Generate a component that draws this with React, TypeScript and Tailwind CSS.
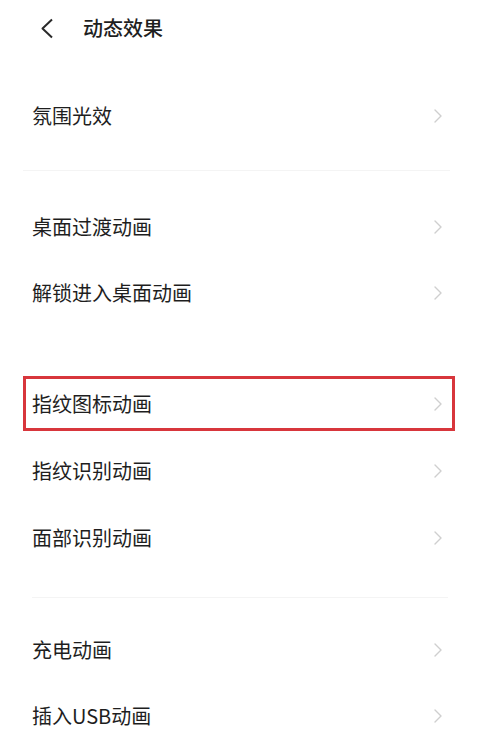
import React from "react";

const font = { fontFamily: '"Noto Sans CJK SC", "Noto Sans", sans-serif' };

function Chevron() {
  return (
    <svg width="8" height="14" viewBox="0 0 8 14" fill="none">
      <path d="M1 1l6 6-6 6" stroke="#cfcfcf" strokeWidth="1.4" strokeLinecap="round" strokeLinejoin="round" />
    </svg>
  );
}

type RowProps = { label: string; h: string; highlight?: boolean };

function Row({ label, h, highlight }: RowProps) {
  return (
    <div className={`${h} flex items-center px-[23px]`}>
      {highlight ? (
        <div className="flex h-[55px] w-full items-center justify-between border-[3px] border-[#d8363c] pl-[6px] pr-[10px]">
          <span className="text-[20px] leading-none text-[#1e1e1e]">{label}</span>
          <Chevron />
        </div>
      ) : (
        <div className="flex w-full items-center justify-between pl-[9px] pr-[13px]">
          <span className="text-[20px] leading-none text-[#1e1e1e]">{label}</span>
          <Chevron />
        </div>
      )}
    </div>
  );
}

function Divider({ top, bottom, inset }: { top: string; bottom: string; inset: string }) {
  return (
    <div className={`${top} ${bottom}`}>
      <div className={`${inset} h-px bg-[#f4f4f4]`} />
    </div>
  );
}

export default function App() {
  return (
    <div className="h-[730px] w-[478px] overflow-hidden bg-white" style={font}>
      <div className="flex h-[56px] items-center pl-[40px]">
        <svg width="14" height="21" viewBox="0 0 14 21" fill="none">
          <path d="M12 1.5L2.5 10.5 12 19.5" stroke="#2a2a2a" strokeWidth="2" strokeLinejoin="round" />
        </svg>
        <h1 className="ml-[29px] text-[20px] font-medium leading-none text-[#1f1f1f]">动态效果</h1>
      </div>

      <div className="pt-[27px]">
        <Row label="氛围光效" h="h-[66px]" />
      </div>

      <Divider top="pt-[21px]" bottom="pb-[23px]" inset="ml-[23px] mr-[28px]" />

      <Row label="桌面过渡动画" h="h-[66px]" />
      <Row label="解锁进入桌面动画" h="h-[66px]" />

      <div className="mt-[44px]">
        <Row label="指纹图标动画" h="h-[67px]" highlight />
        <Row label="指纹识别动画" h="h-[67px]" />
        <Row label="面部识别动画" h="h-[67px]" />
      </div>

      <Divider top="pt-[26px]" bottom="pb-[19px]" inset="ml-[32px] mr-[30px]" />

      <Row label="充电动画" h="h-[66px]" />
      <Row label="插入USB动画" h="h-[66px]" />
    </div>
  );
}
